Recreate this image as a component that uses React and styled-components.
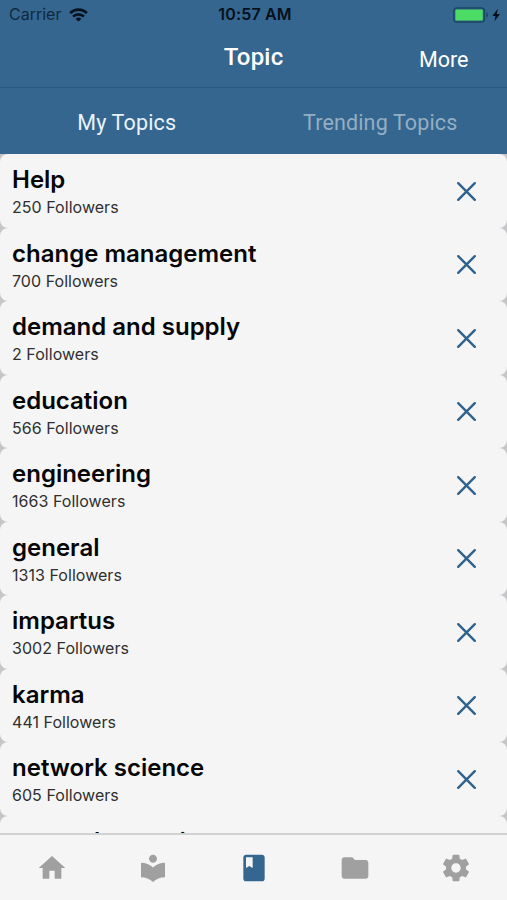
import React from 'react'
import styled, { createGlobalStyle } from 'styled-components'
import { MdHome, MdLocalLibrary, MdClass, MdFolder } from 'react-icons/md'

const topics = [
  { name: 'Help', followers: 250 },
  { name: 'change management', followers: 700 },
  { name: 'demand and supply', followers: 2 },
  { name: 'education', followers: 566 },
  { name: 'engineering', followers: 1663 },
  { name: 'general', followers: 1313 },
  { name: 'impartus', followers: 3002 },
  { name: 'karma', followers: 441 },
  { name: 'network science', followers: 605 },
  { name: 'network security' },
]

const blue = '#35668f'

const GlobalStyle = createGlobalStyle`
  * { box-sizing: border-box; }
  body {
    margin: 0;
    overflow: hidden;
  }
`
const Screen = styled.div`
  display: flex;
  flex-direction: column;
  width: 507px;
  height: 900px;
  background: #f5f5f5;
  font-family: Inter, 'Liberation Sans', sans-serif;
`
const Header = styled.header`
  flex: none;
  height: 154.3px;
  background: ${blue};
`
const StatusBar = styled.div`
  display: grid;
  grid-template-columns: 1fr auto 1fr;
  align-items: center;
  height: 29px;
  padding: 0 6px 0 9px;
  font-size: 16px;
  line-height: 29px;
`
const Carrier = styled.div`
  display: flex;
  align-items: center;
  gap: 8px;
  color: #12293d;
`
const Clock = styled.div`
  color: #06101a;
  font-weight: 600;
  letter-spacing: 0.15px;
`
const Battery = styled.div`
  display: flex;
  justify-content: flex-end;
`
const TitleBar = styled.div`
  display: grid;
  grid-template-columns: 1fr auto 1fr;
  height: 59px;
  border-bottom: 1px solid #2b5880;
  color: #fff;
  font-family: Roboto, sans-serif;
`
const Title = styled.h1`
  margin: 0;
  font-size: 24px;
  font-weight: 500;
  line-height: 57px;
  letter-spacing: 0.2px;
`
const More = styled.div`
  grid-column: 3;
  justify-self: end;
  padding-right: 38.5px;
  font-size: 21.5px;
  line-height: 61px;
`
const Tabs = styled.div`
  display: grid;
  grid-template-columns: 1fr 1fr;
  height: 66px;
`
const Tab = styled.div`
  color: ${({ $active }) => ($active ? '#eaf3fb' : '#94aec4')};
  font-family: Roboto, sans-serif;
  font-size: 21.5px;
  line-height: 69px;
  letter-spacing: 0.15px;
  text-align: center;
`
const List = styled.main`
  flex: 1;
  min-height: 0;
  overflow: hidden;
  background: #c6c6c8;
`
const Row = styled.div`
  display: flex;
  align-items: center;
  justify-content: space-between;
  height: 73.5px;
  padding: 0 30px 0 12px;
  border-radius: 8px;
  background: #f5f5f5;
`
const Info = styled.div`
  height: 55px;
  padding-top: 1.6px;
`
const Name = styled.div`
  color: #060606;
  font-size: 24px;
  font-weight: 600;
  line-height: 30px;
`
const Followers = styled.div`
  color: #2f2f2f;
  font-size: 16px;
  line-height: 25px;
  letter-spacing: 0.04px;
`
const TabBar = styled.nav`
  display: grid;
  grid-template-columns: repeat(5, 1fr);
  flex: none;
  height: 67px;
  padding-left: 1px;
  border-top: 2px solid #d2d2d2;
  background: #f5f5f5;
`
const TabItem = styled.div`
  display: flex;
  align-items: center;
  justify-content: center;
  color: ${({ $active }) => ($active ? blue : '#a0a0a0')};
`

const WifiIcon = () => (
  <svg width="19" height="14" viewBox="0 0 19 14" fill="none" stroke="#06121d" strokeWidth="2.7">
    <path d="M1.1 5.1a12 12 0 0 1 16.8 0" />
    <path d="M4.1 8.6a7.7 7.7 0 0 1 10.8 0" />
    <path d="M9.5 13.6 6.7 10.9a4 4 0 0 1 5.6 0z" fill="#06121d" stroke="none" />
  </svg>
)

const BatteryIcon = () => (
  <svg width="48" height="16" viewBox="0 0 48 16">
    <rect x="0.9" y="0.9" width="30.4" height="14.2" rx="3" fill="none" stroke="#1b4565" strokeWidth="1.5" />
    <rect x="2.4" y="2.4" width="27.4" height="11.2" rx="1.2" fill="#4cdb64" />
    <path d="M33.2 5.3c2.4 .8 2.4 4.6 0 5.4z" fill="#1b4565" />
    <path d="M44.8 1.8 39.4 9h3.1L41.4 14.2 47 7h-3.3z" fill="#06101a" />
  </svg>
)

const CloseIcon = () => (
  <svg width="21" height="21" viewBox="0 0 21 21" fill="none" stroke="#2f628c" strokeWidth="2.4" strokeLinecap="round">
    <path d="M2.2 2.2 18.8 18.8M18.8 2.2 2.2 18.8" />
  </svg>
)

const GearIcon = () => (
  <svg width="32" height="32" viewBox="0 0 24 24" fill="currentColor">
    <path d="M19.43 12.98c.04-.32.07-.64.07-.98s-.03-.66-.07-.98l2.11-1.65c.19-.15.24-.42.12-.64l-2-3.46c-.12-.22-.39-.3-.61-.22l-2.49 1c-.52-.4-1.08-.73-1.69-.98l-.38-2.65C14.46 2.18 14.25 2 14 2h-4c-.25 0-.46.18-.49.42l-.38 2.65c-.61.25-1.17.59-1.69.98l-2.49-1c-.23-.09-.49 0-.61.22l-2 3.46c-.13.22-.07.49.12.64l2.11 1.65c-.04.32-.07.65-.07.98s.03.66.07.98l-2.11 1.65c-.19.15-.24.42-.12.64l2 3.46c.12.22.39.3.61.22l2.49-1c.52.4 1.08.73 1.69.98l.38 2.65c.03.24.24.42.49.42h4c.25 0 .46-.18.49-.42l.38-2.65c.61-.25 1.17-.59 1.69-.98l2.49 1c.23.09.49 0 .61-.22l2-3.46c.12-.22.07-.49-.12-.64l-2.11-1.65zM12 15.5c-1.93 0-3.5-1.57-3.5-3.5s1.57-3.5 3.5-3.5 3.5 1.57 3.5 3.5-1.57 3.5-3.5 3.5z" />
  </svg>
)

const App = () => (
  <Screen>
    <GlobalStyle />
    <Header>
      <StatusBar>
        <Carrier>
          Carrier
          <WifiIcon />
        </Carrier>
        <Clock>10:57 AM</Clock>
        <Battery>
          <BatteryIcon />
        </Battery>
      </StatusBar>
      <TitleBar>
        <span />
        <Title>Topic</Title>
        <More>More</More>
      </TitleBar>
      <Tabs>
        <Tab $active>My Topics</Tab>
        <Tab>Trending Topics</Tab>
      </Tabs>
    </Header>
    <List>
      {topics.map(({ name, followers }) => (
        <Row key={name}>
          <Info>
            <Name>{name}</Name>
            {followers && <Followers>{followers} Followers</Followers>}
          </Info>
          <CloseIcon />
        </Row>
      ))}
    </List>
    <TabBar>
      <TabItem><MdHome size={32} /></TabItem>
      <TabItem><MdLocalLibrary size={32} /></TabItem>
      <TabItem $active><MdClass size={32} /></TabItem>
      <TabItem><MdFolder size={32} /></TabItem>
      <TabItem><GearIcon /></TabItem>
    </TabBar>
  </Screen>
)

export default App
